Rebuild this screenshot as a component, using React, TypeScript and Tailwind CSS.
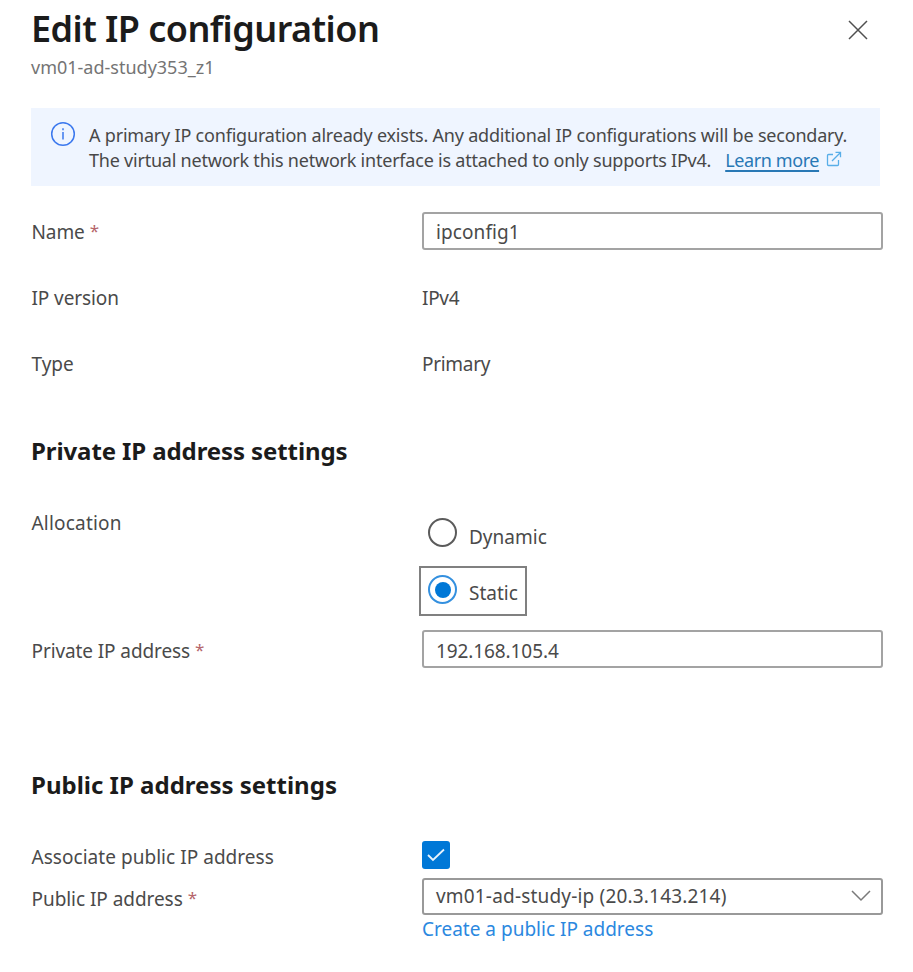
import type { ReactNode } from "react";

function Label({ children, required, className = "", rowClassName = "" }: { children: ReactNode; required?: boolean; className?: string; rowClassName?: string }) {
  return (
    <div className={`flex w-[391px] shrink-0 pl-[0.5px] whitespace-nowrap ${rowClassName}`}>
      <span className={className}>{children}</span>
      {required && <span className="-mt-px ml-[5px] text-[17px] text-[#b5656b]">*</span>}
    </div>
  );
}

function CloseIcon() {
  return (
    <svg width="20" height="20" viewBox="0 0 20 20" fill="none" stroke="#505050" strokeWidth="1.5">
      <path d="M1 1l18 18M19 1L1 19" />
    </svg>
  );
}

function InfoIcon() {
  return (
    <svg width="26" height="26" viewBox="0 0 26 26" fill="none" stroke="#3b78ee" strokeWidth="1.5">
      <circle cx="13" cy="13" r="11.3" />
      <path d="M13 11v7.5M13 7.2v2" />
    </svg>
  );
}

function ExternalIcon() {
  return (
    <svg className="ml-[7px] mb-[3px]" width="16" height="16" viewBox="0 0 16 16" fill="none" stroke="#58aee8" strokeWidth="1.3">
      <path d="M7 3.5H2.5a1 1 0 0 0-1 1v9a1 1 0 0 0 1 1h9a1 1 0 0 0 1-1V9M6 10l8-8M9.5 1.3h5v5" />
    </svg>
  );
}

export default function App() {
  return (
    <main className="flex h-[972px] w-[913px] flex-col bg-white pl-[31px] font-['Noto_Sans','Open_Sans',sans-serif] text-[19px] leading-[26px] text-[#4a4a4a]">
      <header className="flex h-[108px] shrink-0 justify-between pr-[45px]">
        <div className="whitespace-nowrap">
          <h1 className="mt-[4px] h-[50px] text-[36px] leading-[50px] font-semibold tracking-[-0.55px] text-[#1b1b1b]">Edit IP configuration</h1>
          <p className="text-[18px] leading-[26px] text-[#747474]">vm01-ad-study353_z1</p>
        </div>
        <button aria-label="Close" className="mt-[20px] h-5 w-5">
          <CloseIcon />
        </button>
      </header>

      <section className="flex h-[78px] w-[849px] shrink-0 bg-[#eff5ff] pt-[13px] pl-[19px]">
        <InfoIcon />
        <div className="mt-[2px] ml-[13px] text-[18px] leading-[25px] whitespace-nowrap text-[#484848]">
          <p className="h-[25px] tracking-[-0.2px]">A primary IP configuration already exists. Any additional IP configurations will be secondary.</p>
          <div className="flex items-center">
            <span className="tracking-[-0.22px]">The virtual network this network interface is attached to only supports IPv4.</span>
            <a className="ml-[14px] tracking-[-0.4px] text-[#2878b5] underline decoration-[1.5px] underline-offset-[3px]">Learn more</a>
            <ExternalIcon />
          </div>
        </div>
      </section>

      <section className="shrink-0">
        <div className="mt-[26px] flex h-[38px] items-center">
          <Label required rowClassName="mt-[2px]" className="tracking-[-0.1px]">Name</Label>
          <div className="flex h-[38px] w-[461px] items-center rounded-[3px] border-2 border-[#a3a3a3] pl-[12px]">
            <span className="mt-[2px] tracking-[0.1px]">ipconfig1</span>
          </div>
        </div>
        <div className="mt-[15px] flex h-[66px] items-center">
          <Label className="tracking-[-0.1px]">IP version</Label>
          <span className="tracking-[-0.3px]">IPv4</span>
        </div>
        <div className="flex h-[66px] items-center">
          <Label>Type</Label>
          <span className="tracking-[-0.3px]">Primary</span>
        </div>
      </section>

      <section className="shrink-0">
        <h2 className="mt-[36px] h-[36px] text-[24px] leading-[36px] font-bold tracking-[-0.1px] text-[#1b1b1b]">Private IP address settings</h2>
        <div className="mt-[41px] flex h-[108px]">
          <Label className="tracking-[0.2px]">Allocation</Label>
          <div className="flex flex-col">
            <div className="mt-[8px] flex h-[32px] items-start pl-[6px]">
              <span className="h-[29px] w-[29px] rounded-full border-2 border-[#5b5b5b]" />
              <span className="mt-[6px] ml-[12px]">Dynamic</span>
            </div>
            <div className="mt-[16px] -ml-[3px] flex h-[50px] w-[108px] shrink-0 items-start border-2 border-[#808080] pt-[7px] pl-[7px]">
              <span className="flex h-[29px] w-[29px] shrink-0 items-center justify-center rounded-full border-2 border-[#3490df]">
                <span className="h-[16px] w-[16px] rounded-full bg-[#0078d7]" />
              </span>
              <span className="mt-[5px] ml-[12px]">Static</span>
            </div>
          </div>
        </div>
        <div className="mt-[12px] flex h-[38px] items-center">
          <Label required rowClassName="mt-[3px]" className="tracking-[-0.1px]">Private IP address</Label>
          <div className="flex h-[38px] w-[461px] items-center rounded-[3px] border-2 border-[#a3a3a3] pl-[12px]">
            <span className="mt-[3px] tracking-[-0.1px]">192.168.105.4</span>
          </div>
        </div>
      </section>

      <section className="shrink-0">
        <h2 className="mt-[99px] h-[36px] text-[24px] leading-[36px] font-bold text-[#1b1b1b]">Public IP address settings</h2>
        <div className="mt-[37px] flex h-[30px] items-center">
          <Label rowClassName="mt-[4px]" className="tracking-[0.04px]">Associate public IP address</Label>
          <span className="flex h-[28px] w-[28px] items-center justify-center rounded-[3px] bg-[#0078d7]">
            <svg width="18" height="14" viewBox="0 0 18 14" fill="none" stroke="#e8f3fc" strokeWidth="1.8">
              <path d="M1 7l5 5L17 1.5" />
            </svg>
          </span>
        </div>
        <div className="mt-[7px] flex h-[38px] items-center">
          <Label required rowClassName="mt-[5px]" className="tracking-[-0.05px]">Public IP address</Label>
          <div className="flex h-[37px] w-[461px] items-center justify-between rounded-[3px] border-2 border-[#999] pr-[10px] pl-[12px]">
            <span className="tracking-[0.18px]">vm01-ad-study-ip (20.3.143.214)</span>
            <svg width="20" height="12" viewBox="0 0 20 12" fill="none" stroke="#7a7a7a" strokeWidth="1.5">
              <path d="M1 1l9 9 9-9" />
            </svg>
          </div>
        </div>
        <a className="mt-px ml-[391px] block text-[#2b88df]">Create a public IP address</a>
      </section>
    </main>
  );
}
